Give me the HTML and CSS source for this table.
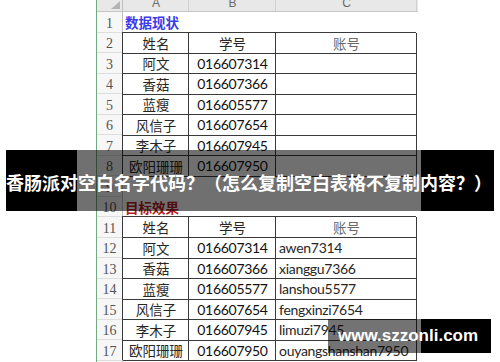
FILE: index.html
```html
<!DOCTYPE html>
<html lang="zh">
<head>
<meta charset="utf-8">
<link rel="stylesheet" href="styles.css">
</head>
<body>
<div class="sheet">
  <div class="gutter"></div>
  <div class="rowhead">
    <div class="corner"><svg width="9" height="8" viewBox="0 0 9 8"><polygon points="9,0 9,8 0,8" fill="#b4b4b4"/></svg></div>
    <div class="n">1</div><div class="n">2</div><div class="n">3</div><div class="n">4</div>
    <div class="n">5</div><div class="n">6</div><div class="n">7</div><div class="n">8</div>
    <div class="n">9</div><div class="n">10</div><div class="n">11</div><div class="n">12</div>
    <div class="n">13</div><div class="n">14</div><div class="n">15</div><div class="n">16</div>
    <div class="n">17</div>
  </div>
  <div class="main">
    <div class="colhead"><div class="h">A</div><div class="h">B</div><div class="h">C</div></div>
    <div class="r title blue">数据现状</div>
    <div class="tbl">
      <div class="row"><div class="c zh">姓名</div><div class="c zh">学号</div><div class="c zh grey">账号</div></div>
      <div class="row"><div class="c zh">阿文</div><div class="c">016607314</div><div class="c l"></div></div>
      <div class="row"><div class="c zh">香菇</div><div class="c">016607366</div><div class="c l"></div></div>
      <div class="row"><div class="c zh">蓝瘦</div><div class="c">016605577</div><div class="c l"></div></div>
      <div class="row"><div class="c zh">风信子</div><div class="c">016607654</div><div class="c l"></div></div>
      <div class="row"><div class="c zh">李木子</div><div class="c">016607945</div><div class="c l"></div></div>
      <div class="row"><div class="c zh">欧阳珊珊</div><div class="c">016607950</div><div class="c l"></div></div>
    </div>
    <div class="r"></div>
    <div class="r title red">目标效果</div>
    <div class="tbl">
      <div class="row"><div class="c zh">姓名</div><div class="c zh">学号</div><div class="c zh grey">账号</div></div>
      <div class="row"><div class="c zh">阿文</div><div class="c">016607314</div><div class="c l">awen7314</div></div>
      <div class="row"><div class="c zh">香菇</div><div class="c">016607366</div><div class="c l">xianggu7366</div></div>
      <div class="row"><div class="c zh">蓝瘦</div><div class="c">016605577</div><div class="c l">lanshou5577</div></div>
      <div class="row"><div class="c zh">风信子</div><div class="c">016607654</div><div class="c l">fengxinzi7654</div></div>
      <div class="row"><div class="c zh">李木子</div><div class="c">016607945</div><div class="c l">limuzi7945</div></div>
      <div class="row"><div class="c zh">欧阳珊珊</div><div class="c">016607950</div><div class="c l">ouyangshanshan7950</div></div>
    </div>
  </div>
</div>
<div class="band">香肠派对空白名字代码？（怎么复制空白表格不复制内容？）</div>
<div class="mark">www.szzonli.com</div>
</body>
</html>
```

FILE: styles.css
```css
html, body {
  margin: 0;
  padding: 0;
}
body {
  width: 500px;
  height: 362px;
  overflow: hidden;
  background: #fff;
  position: relative;
  font-family: Lato, "Noto Sans CJK SC", sans-serif;
}
.sheet {
  display: flex;
  margin-left: 77px;
  width: 344px;
  height: 362px;
  background: #fff;
}
.gutter {
  width: 19px;
  flex: none;
}
.rowhead {
  width: 27px;
  flex: none;
  box-sizing: border-box;
  border-left: 1px solid #74a883;
  border-right: 1px solid #bdbdbd;
  background: #f7f7f7;
}
.corner {
  height: 12px;
  box-sizing: border-box;
  background: #e8e8e8;
  border-bottom: 1px solid #c6c6c6;
  display: flex;
  justify-content: flex-end;
  align-items: flex-end;
  padding: 0 2px 2px 0;
}
.corner svg {
  display: block;
}
.n {
  height: 20.5px;
  box-sizing: border-box;
  box-shadow: inset 0 -1px 0 #dedede;
  display: flex;
  justify-content: center;
  align-items: center;
  padding-top: 3px;
  font-family: "Liberation Serif", serif;
  font-size: 14px;
  color: #555;
}
.main {
  width: 295px;
  flex: none;
}
.colhead {
  height: 12px;
  box-sizing: border-box;
  display: grid;
  grid-template-columns: 66px 87px 141px 1px;
  background: #e8e8e8;
  border-bottom: 1px solid #c6c6c6;
  overflow: hidden;
}
.h {
  box-shadow: inset -1px 0 0 #d0d0d0;
  text-align: center;
  font-family: "Liberation Sans", sans-serif;
  font-size: 12px;
  line-height: 6px;
  color: #6a6a6a;
}
.r {
  height: 20.5px;
  width: 294px;
}
.title {
  display: flex;
  align-items: center;
  padding-left: 2px;
  box-sizing: border-box;
  font-family: "Noto Sans CJK SC", sans-serif;
  font-weight: 700;
  font-size: 13.5px;
}
.blue {
  color: #3b3bea;
}
.red {
  color: #b01c22;
}
.tbl {
  width: 294px;
  box-shadow: -1px -1px 0 0 #3a3a3a;
}
.row {
  display: grid;
  grid-template-columns: 66px 87px 141px;
  height: 20.5px;
}
.c {
  box-sizing: border-box;
  box-shadow: inset -1px -1px 0 #3a3a3a;
  display: flex;
  align-items: center;
  justify-content: center;
  padding-bottom: 1px;
  font-size: 14px;
  letter-spacing: -0.3px;
  color: #111;
  white-space: nowrap;
}
.c.zh {
  font-family: "Noto Sans CJK SC", sans-serif;
  font-size: 13.5px;
  letter-spacing: 0;
  color: #262626;
}
.c.grey {
  color: #6a6a6a;
}
.c.l {
  justify-content: flex-start;
  padding-left: 3px;
  color: #262626;
}
.band {
  position: absolute;
  left: 6px;
  top: 150px;
  width: 488px;
  height: 61px;
  box-sizing: border-box;
  padding-top: 3px;
  background: linear-gradient(90deg, #000 0, #000 71px, rgba(0, 0, 0, 0.56) 71px, rgba(0, 0, 0, 0.56) 415px, #000 415px, #000 488px);
  color: #fff;
  font-family: "Noto Sans CJK SC", sans-serif;
  font-weight: 700;
  font-size: 18px;
  line-height: 58px;
  white-space: nowrap;
}
.mark {
  position: absolute;
  left: 328px;
  top: 319px;
  width: 163px;
  height: 34px;
  box-sizing: border-box;
  padding-left: 10px;
  background: linear-gradient(90deg, rgba(0, 0, 0, 0.55) 0, rgba(0, 0, 0, 0.55) 93px, #000 93px, #000 163px);
  color: #fff;
  font-family: "Liberation Sans", sans-serif;
  font-weight: 700;
  font-size: 17px;
  line-height: 34px;
  white-space: nowrap;
}
```
